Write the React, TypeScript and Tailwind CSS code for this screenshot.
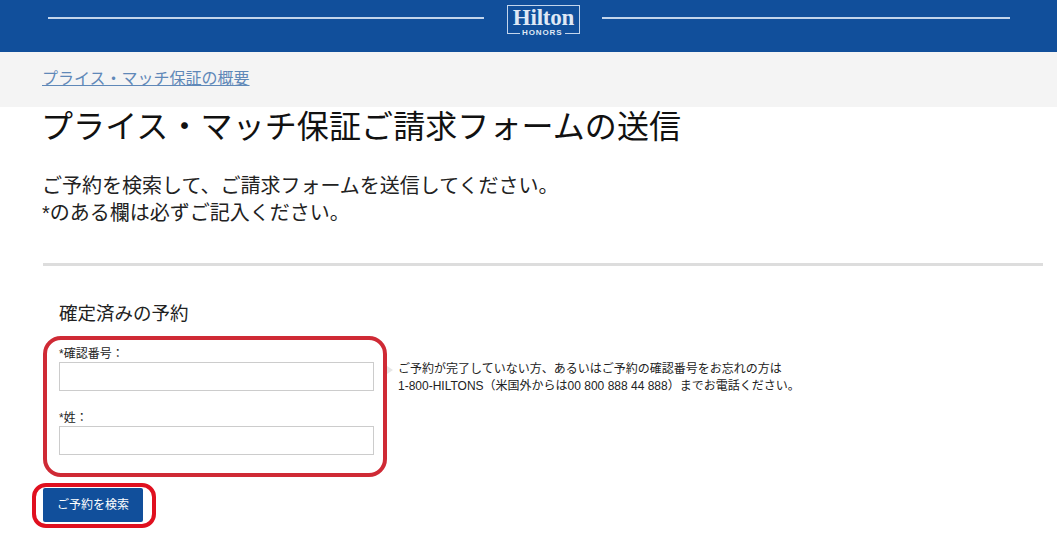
import React from "react";

const jp = "font-['Liberation_Sans','Noto_Sans_CJK_JP',sans-serif]";

const Logo = () => {
  return (
    <div className="relative w-[73px] h-[29px] border border-[#c3d5ec] flex justify-center">
      <span className="font-['Liberation_Serif',serif] font-bold text-[23px] leading-[23px] text-[#dfe8f5] tracking-[-0.2px]">
        Hilton
      </span>
      <span className="absolute left-[12px] -bottom-[4px] px-[2px] bg-[#114f9b] font-['Liberation_Sans',sans-serif] font-bold text-[8px] leading-[8px] tracking-[0.9px] text-[#dfe8f5]">
        HONORS
      </span>
    </div>
  );
};

const Field = ({ label }: { label: string }) => {
  return (
    <div className="w-[315px]">
      <label className="block text-[12px] leading-[16px] text-[#222]">{label}</label>
      <input className="block w-full h-[29px] border border-[#cccccc] bg-white" />
    </div>
  );
};

export default function App() {
  return (
    <div className={`${jp} w-[1057px] h-[541px] overflow-hidden bg-white text-black`}>
      <header className="h-[52px] bg-[#114f9b] flex items-start pl-[48px] pt-[5px]">
        <div className="w-[436px] h-[2px] mt-[12px] bg-[#c3d5ec]" />
        <div className="ml-[23px] mr-[22px]">
          <Logo />
        </div>
        <div className="w-[408px] h-[2px] mt-[12px] bg-[#c3d5ec]" />
      </header>

      <div className="h-[55px] bg-[#f4f4f4] pl-[42px] pt-[15px]">
        <a href="#" className="text-[16px] leading-[24px] text-[#5f88b8] underline">
          プライス・マッチ保証の概要
        </a>
      </div>

      <main className="pl-[42px]">
        <h1 className="-ml-px text-[32px] leading-[40px] tracking-[0.1px] text-[#111]">
          プライス・マッチ保証ご請求フォームの送信
        </h1>
        <p className="mt-[26px] text-[20px] leading-[27px] text-[#222]">
          ご予約を検索して、ご請求フォームを送信してください。
          <br />
          *のある欄は必ずご記入ください。
        </p>
        <div className="mt-[36px] ml-px w-[1000px] h-[3px] bg-[#dddddd]" />

        <section className="relative mt-[35px] pl-[17px]">
          <h2 className="text-[18.5px] leading-[26px] text-[#222]">確定済みの予約</h2>
          <div className="mt-[19px] flex items-start">
            <div className="flex flex-col gap-[19px]">
              <Field label="*確認番号：" />
              <Field label="*姓：" />
            </div>
            <div className="ml-[13px] mt-[15px] flex items-start">
              <div className="mt-[5px] w-0 h-0 border-y-[4px] border-y-transparent border-l-[6px] border-l-[#e6e6e6]" />
              <p className="ml-[5px] whitespace-nowrap text-[12px] leading-[17px] text-[#222]">
                ご予約が完了していない方、あるいはご予約の確認番号をお忘れの方は
                <br />
                1-800-HILTONS（米国外からは00 800 888 44 888）までお電話ください。
              </p>
            </div>
          </div>
          <button className="block mt-[33px] -ml-[16px] w-[100px] h-[34px] rounded-[2px] bg-[#114f9b] text-white text-[12px]">
            ご予約を検索
          </button>

          {/* red annotations drawn over the form */}
          <div className="absolute left-[1px] top-[35px] w-[344px] h-[141px] rounded-[18px] border-[4px] border-[#cf2a35]" />
          <div className="absolute -left-[10px] top-[182px] w-[124px] h-[45px] rounded-[14px] border-[4px] border-[#e0101f]" />
        </section>
      </main>
    </div>
  );
}
